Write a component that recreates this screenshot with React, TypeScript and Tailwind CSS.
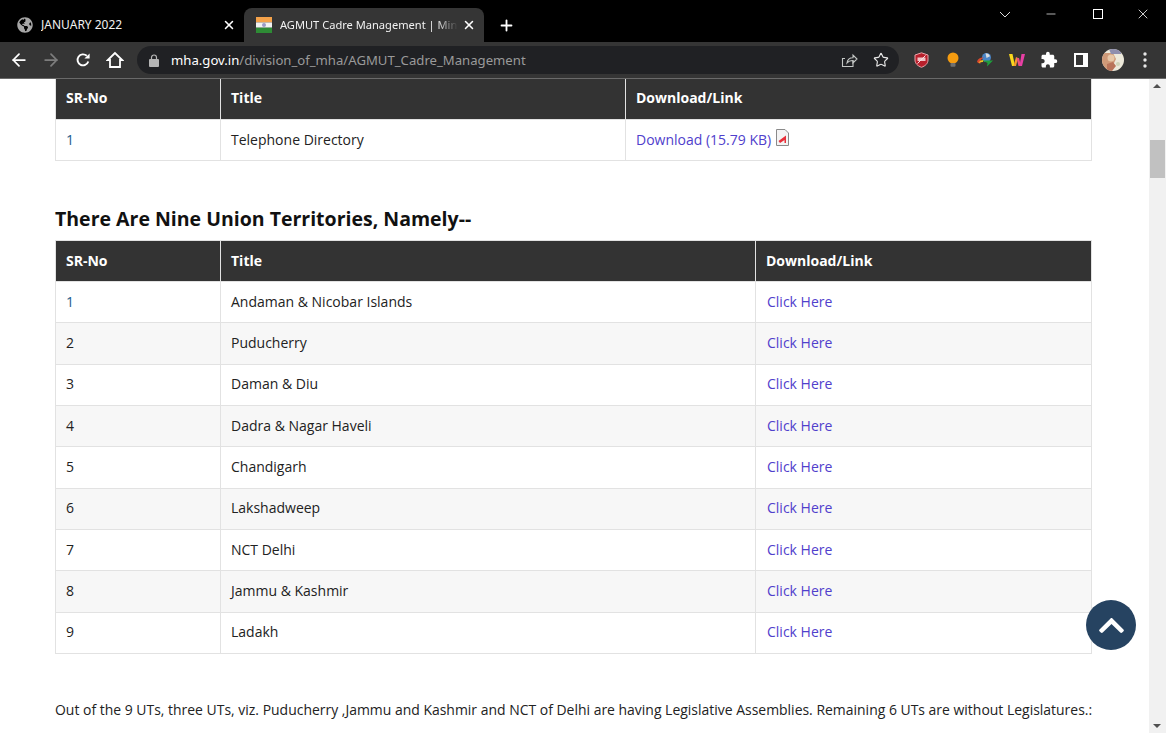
import { FaGlobeAmericas, FaChevronUp } from "react-icons/fa";
import { MdExtension } from "react-icons/md";
import { ArrowLeft, ArrowRight, Star, X, Plus, Minus } from "lucide-react";

const ROWS = ["Andaman & Nicobar Islands", "Puducherry", "Daman & Diu", "Dadra & Nagar Haveli", "Chandigarh", "Lakshadweep", "NCT Delhi", "Jammu & Kashmir", "Ladakh"];

function Flag() {
  return (
    <svg width="16" height="16" viewBox="0 0 16 16" className="shrink-0">
      <rect width="16" height="5.4" fill="#f4a24a" />
      <rect y="5.4" width="16" height="5.3" fill="#f2f2f2" />
      <rect y="10.7" width="16" height="5.3" fill="#2e8b35" />
      <circle cx="8" cy="8" r="2" fill="#9a9ac6" />
    </svg>
  );
}

function Tab({ active, title, icon }: { active?: boolean; title: string; icon: React.ReactNode }) {
  return (
    <div className={active ? "flex h-[34px] w-[240px] items-center rounded-t-lg bg-[#353535] pl-3 pr-2" : "flex h-[34px] w-[236px] items-center pl-[9px] pr-2"}>
      {icon}
      <span className={active ? "ml-2 w-[177px] flex-1 overflow-hidden font-['Noto_Sans'] text-[11.1px] whitespace-nowrap text-[#f1f1f1] [mask-image:linear-gradient(to_left,transparent,black_22px)]" : "ml-2 w-[177px] flex-1 overflow-hidden font-['Noto_Sans'] text-[12px] whitespace-nowrap text-[#f1f1f1]"}>{title}</span>
      <X size={14} strokeWidth={2.6} className="ml-1 shrink-0 text-white" />
    </div>
  );
}

function Tool({ children }: { children: React.ReactNode }) {
  return <div className="flex h-8 w-8 shrink-0 items-center justify-center">{children}</div>;
}

function Cell({ children, className = "" }: { children: React.ReactNode; className?: string }) {
  return <td className={"border border-[#e2e2e2] pr-[10px] pb-[2px] pl-[10px] align-middle " + className}>{children}</td>;
}

function Head({ children, className = "pb-[3px]" }: { children: React.ReactNode; className?: string }) {
  return <th className={"border border-[#e2e2e2] bg-[#333333] pr-[10px] pl-[10px] text-left align-middle text-[14px] font-bold text-white " + className}>{children}</th>;
}

export default function App() {
  return (
    <div className="flex h-[733px] w-[1166px] flex-col overflow-hidden bg-white font-['Open_Sans',sans-serif] text-[14px] text-[#222222]">
      {/* tab strip */}
      <div className="flex h-[42px] shrink-0 items-end bg-black pl-2">
        <Tab title="JANUARY 2022" icon={<FaGlobeAmericas size={16} className="shrink-0 text-[#a6a6a6]" />} />
        <Tab active title="AGMUT Cadre Management | Ministry of Home" icon={<Flag />} />
        <div className="flex h-[34px] w-11 items-center justify-center"><Plus size={17} strokeWidth={2.6} className="text-white" /></div>
        <div className="ml-auto flex h-[42px] items-start self-start">
          <div className="flex h-[28px] w-[46px] items-center justify-center">
            <svg width="12" height="7" viewBox="0 0 12 7" fill="none" stroke="#dddddd" strokeWidth="1"><path d="M1 1l5 5 5-5" /></svg>
          </div>
          <div className="flex h-[28px] w-[46px] items-center justify-center"><Minus size={14} strokeWidth={1.2} className="text-white" /></div>
          <div className="flex h-[28px] w-[46px] items-center justify-center pl-[1px]">
            <div className="h-[10px] w-[10px] border border-white" />
          </div>
          <div className="flex h-[28px] w-[46px] items-center justify-center"><X size={16} strokeWidth={1.2} className="text-white" /></div>
        </div>
      </div>

      {/* toolbar */}
      <div className="flex h-[37px] shrink-0 items-center border-b border-[#6a6a6a] bg-[#353535] pl-[3px]">
        <Tool><ArrowLeft size={20} strokeWidth={2.1} className="text-white" /></Tool>
        <Tool><ArrowRight size={20} strokeWidth={2.1} className="text-[#7d7d7d]" /></Tool>
        <Tool>
          <svg width="16" height="16" viewBox="0 0 16 16" fill="none" stroke="#fff" strokeWidth="1.9">
            <path d="M13.300 9.500A5.500 5.500 0 1 1 11.800 3.800" />
            <path d="M14.600 1.400V6.600H9.400z" fill="#fff" stroke="none" />
          </svg>
        </Tool>
        <Tool>
          <svg width="18" height="18" viewBox="0 0 18 18" fill="none" stroke="#fff" strokeWidth="1.8" strokeLinejoin="miter">
            <path d="M9 2 1.800 9H4v7h10V9h2.200z" />
          </svg>
        </Tool>
        <div className="ml-[6px] flex h-7 w-[762px] shrink-0 items-center rounded-full bg-[#202124] pl-[12px] pr-[2px]">
          <svg width="10" height="13" viewBox="0 0 10 13" className="shrink-0">
            <path d="M2.500 5V3.500a2.500 2.500 0 0 1 5 0V5" fill="none" stroke="#b5b5b5" strokeWidth="1.200" />
            <rect y="5" width="10" height="8" rx="1" fill="#b5b5b5" />
          </svg>
          <span className="ml-[12px] flex-1 truncate pt-[1px] font-['Noto_Sans'] text-[13.15px] text-[#9a9a9a]"><span className="text-white">mha.gov.in</span>/division_of_mha/AGMUT_Cadre_Management</span>
          <Tool>
            <svg width="18" height="18" viewBox="0 0 18 18" fill="none" stroke="#c4c7c5" strokeWidth="1.1">
              <path d="M13 9.500V15.500H2.500V7.500H5" />
              <path d="M7 12c.4-3.500 2.800-5.200 6-5.200V4l4 4-4 4V9.500c-2.600 0-4.500.6-6 2.500z" />
            </svg>
          </Tool>
          <Tool><Star size={16} strokeWidth={1.7} className="text-[#e8e8e8]" /></Tool>
        </div>
        <div className="ml-[6px] flex items-center">
          <Tool>
            <svg width="15" height="16" viewBox="0 0 15 16">
              <path d="M7.500.800 14 3v5c0 3.500-2.500 5.800-6.500 7.300C3.500 13.800 1 11.500 1 8V3z" fill="#b8202c" stroke="#e8a4aa" strokeWidth="1" />
              <rect x="3.500" y="5.500" width="8" height="3.500" fill="#f0c4c8" />
              <path d="M3.500 11.500 11.500 3.500" stroke="#f7e0e2" strokeWidth="1" />
            </svg>
          </Tool>
          <Tool>
            <svg width="12" height="16" viewBox="0 0 12 16">
              <circle cx="6" cy="6" r="5.500" fill="#f59c10" />
              <rect x="3.500" y="11" width="5" height="3.800" rx="1" fill="#707070" />
            </svg>
          </Tool>
          <Tool>
            <svg width="18" height="16" viewBox="0 0 18 16">
              <circle cx="10.500" cy="5.500" r="4.500" fill="#4a86c8" />
              <path d="M9.500 1.200c2 0 4 1.300 4.500 3L10.500 6z" fill="#d8dce0" />
              <path d="M1 9.500C2 6.500 5 5 8 5.500 5.500 6.500 4 8.500 4.500 11.500 3 11.500 1.500 11 1 9.500z" fill="#d9472c" />
              <path d="M2.500 11c1-2 3-3.200 5-3L7 10c-1.500 0-3 .5-4.500 1z" fill="#f2c21e" />
              <path d="M6.500 8.500h10.500l-6 6 .5-3.500z" fill="#1f9e3c" />
            </svg>
          </Tool>
          <Tool>
            <svg width="16" height="14" viewBox="0 0 16 14">
              <path d="M0 1h3.500L6 13H3z" fill="#f9d71c" />
              <path d="M4.500 13 7 4l2 1-2 8z" fill="#f59b2c" />
              <path d="M7.500 5 10 5l2 8H9.500z" fill="#ef4f7e" />
              <path d="M10.500 13 12.500 1H16l-3 12z" fill="#e83fa4" />
            </svg>
          </Tool>
          <Tool><MdExtension size={18} className="text-white" /></Tool>
          <Tool>
            <svg width="14" height="14" viewBox="0 0 14 14">
              <path fillRule="evenodd" d="M0 0h14v14H0zM2 2v10h7V2z" fill="#fff" />
            </svg>
          </Tool>
          <Tool>
            <svg width="22" height="22" viewBox="0 0 22 22">
              <defs><clipPath id="avatar"><circle cx="11" cy="11" r="11" /></clipPath></defs>
              <g clipPath="url(#avatar)">
                <rect width="22" height="22" fill="#ece9da" />
                <path d="M0 4h11l3 6-3 6-4 6H0z" fill="#cf9a78" />
                <path d="M7 0h12v5H9z" fill="#8f8fae" />
                <circle cx="9" cy="9" r="3.500" fill="#e7c8a8" />
                <path d="M5 15l6-2 3 4-4 5H5z" fill="#b9745a" />
                <circle cx="16" cy="15" r="2" fill="#cfd3b8" />
              </g>
            </svg>
          </Tool>
          <Tool>
            <svg width="4" height="16" viewBox="0 0 4 16" fill="#e8e8e8">
              <circle cx="2" cy="2" r="1.700" /><circle cx="2" cy="8" r="1.700" /><circle cx="2" cy="14" r="1.700" />
            </svg>
          </Tool>
        </div>
      </div>

      {/* page */}
      <div className="relative flex min-h-0 flex-1">
        <div className="min-w-0 flex-1 overflow-hidden pl-[55px] pr-[57px]">
          <table className="-mt-px w-[1037px] table-fixed border-collapse">
            <colgroup><col className="w-[165px]" /><col className="w-[405px]" /><col /></colgroup>
            <thead><tr className="h-[41px]"><Head>SR-No</Head><Head>Title</Head><Head>Download/Link</Head></tr></thead>
            <tbody>
              <tr className="h-[41px]">
                <Cell className="text-[#1c5c8c]">1</Cell>
                <Cell>Telephone Directory</Cell>
                <Cell>
                  <span className="flex items-center gap-[5px]">
                    <span className="text-[#5040cc]">Download (15.79 KB)</span>
                    <svg width="13" height="17" viewBox="0 0 13 17" className="-mt-1">
                      <path d="M.5.500H9L12.500 4V16.500H.5z" fill="#f4f4f4" stroke="#8a8a8a" />
                      <path d="M2.500 12 10 6.500V14H8.500v-3L4 14z" fill="#e8303a" />
                    </svg>
                  </span>
                </Cell>
              </tr>
            </tbody>
          </table>

          <h2 className="mt-[44px] text-[19.5px] leading-[27px] font-bold text-[#111111]">There Are Nine Union Territories, Namely--</h2>
          <table className="mt-[8px] w-[1037px] table-fixed border-collapse">
            <colgroup><col className="w-[165px]" /><col className="w-[535px]" /><col /></colgroup>
            <thead><tr className="h-[41px]"><Head className="pb-[1px]">SR-No</Head><Head className="pb-[1px]">Title</Head><Head className="pb-[1px]">Download/Link</Head></tr></thead>
            <tbody>
              {ROWS.map((name, i) => (
                <tr key={name} className={i % 2 === 1 ? "h-[41.34px] bg-[#f7f7f7]" : "h-[41.34px]"}>
                  <Cell className={i === 0 ? "text-[#1c5c8c]" : ""}>{i + 1}</Cell>
                  <Cell>{name}</Cell>
                  <Cell className="pl-[11px] text-[#5040cc]">Click Here</Cell>
                </tr>
              ))}
            </tbody>
          </table>
          <p className="mt-[46px] text-[13.96px] leading-[20px] whitespace-nowrap text-[#222222]">Out of the 9 UTs, three UTs, viz. Puducherry ,Jammu and Kashmir and NCT of Delhi are having Legislative Assemblies. Remaining 6 UTs are without Legislatures.:</p>
        </div>

        {/* scrollbar */}
        <div className="relative h-full w-[17px] shrink-0 bg-[#f1f1f1]">
          <div className="absolute top-[5px] left-[4px] h-0 w-0 border-x-[4px] border-b-[4px] border-x-transparent border-b-[#505050]" />
          <div className="absolute top-[61px] left-[1px] h-[38px] w-[15px] bg-[#c1c1c1]" />
          <div className="absolute bottom-[5px] left-[4px] h-0 w-0 border-x-[4px] border-t-[4px] border-x-transparent border-t-[#505050]" />
        </div>

        <div className="absolute top-[521px] left-[1086px] flex h-[50px] w-[50px] items-center justify-center rounded-full bg-[#264361]">
          <FaChevronUp size={29} className="text-white" />
        </div>
      </div>
    </div>
  );
}
